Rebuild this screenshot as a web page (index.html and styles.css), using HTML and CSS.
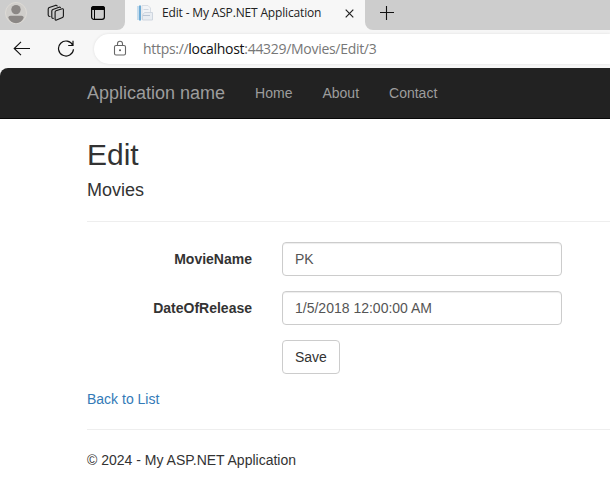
FILE: index.html
```html
<!DOCTYPE html>
<html lang="en">
<head>
<meta charset="utf-8">
<title>Edit - My ASP.NET Application</title>
<link rel="stylesheet" href="styles.css">
</head>
<body>
<div class="tabstrip">
  <div class="strip-left">
    <svg class="avatar" width="24" height="24" viewBox="0 0 24 24"><circle cx="12" cy="12" r="10.5" fill="#d0cecb" stroke="#dedbd6"/><circle cx="12" cy="8.6" r="4.7" fill="#8b8785"/><path d="M4.3 16.8Q4.3 14.8 6.5 14.8H17.5Q19.7 14.8 19.7 16.8Q17.5 22.2 12 22.2Q6.5 22.2 4.3 16.8Z" fill="#8b8785"/></svg>
    <svg class="workspaces" width="18" height="18" viewBox="0 0 18 18" fill="none" stroke="#151515" stroke-width="1.1" stroke-linejoin="round" stroke-linecap="round"><path d="M8.1 8.1Q8.1 7.1 9 6.8L15.2 4.8Q16.4 4.5 16.4 5.7V12Q16.4 13 15.5 13.4L9.5 16Q8.1 16.5 8.1 15.2Z"/><path d="M6.3 14.4Q4.8 14.5 4.8 13V7Q4.8 5.8 5.9 5.4L12 3.2Q13 2.9 13.4 3.6"/><path d="M3 12.5Q1.2 12.4 1.2 11V5.2Q1.2 4 2.3 3.6L8.3 1.4Q9.7 1 10.2 2"/></svg>
    <svg class="tabmenu" width="16" height="16" viewBox="0 0 16 16"><rect x="1.6" y="1.6" width="12.8" height="12.8" rx="2.4" fill="none" stroke="#050505" stroke-width="1.2"/><path d="M1 5V3.5Q1 1 3.5 1H12.5Q15 1 15 3.5V5Z" fill="#050505"/><path d="M4.5 5V14.5" stroke="#050505"/></svg>
  </div>
  <div class="tab">
    <svg class="favicon" width="18" height="18" viewBox="0 0 18 18"><path d="M1 2H3V16H1Z" fill="#c5dced"/><path d="M3 1.5H5V16.5H3Z" fill="#6dabd6"/><path d="M6 1.5H12L14.5 4V15.5H6Z" fill="#f2f4f7" stroke="#d9dee5"/><path d="M7.5 5.5H12.5" stroke="#d0d8e2"/><path d="M8.5 8.5H16.5V16H6.5V11Z" fill="#e9edf2" stroke="#cfd6df"/><path d="M7 11.5H14" stroke="#b9c5d4"/></svg>
    <span class="tab-title">Edit - My ASP.NET Application</span>
    <svg class="close" width="9" height="9" viewBox="0 0 9 9"><path d="M.7 .7L8.3 8.3M8.3 .7L.7 8.3" stroke="#222" stroke-width="1.2"/></svg>
  </div>
  <div class="strip-right">
    <svg width="14" height="14" viewBox="0 0 14 14"><path d="M6.5 0V14M0 6.5H14" stroke="#111" stroke-width="1.1"/></svg>
  </div>
</div>
<div class="toolbar">
  <svg class="back" width="18" height="16" viewBox="0 0 18 16" fill="none" stroke="#111" stroke-width="1.1"><path d="M17 7.5H1.3M8 .8L1.2 7.5L8 14.2"/></svg>
  <svg class="reload" width="18" height="18" viewBox="0 0 18 18" fill="none" stroke="#111" stroke-width="1.2"><path d="M15.8 5.3A7.5 7.5 0 1 0 16.5 9.2M16 .8V5.5H11.2"/></svg>
  <div class="address">
    <svg class="lock" width="14" height="17" viewBox="0 0 14 17"><rect x="1.5" y="5.5" width="11" height="9.5" rx="1.5" fill="none" stroke="#666" stroke-width="1.1"/><path d="M4.5 5.5V3.7A2.5 2.5 0 0 1 9.5 3.7V5.5" fill="none" stroke="#666" stroke-width="1.1"/><circle cx="7" cy="10.3" r="1" fill="#555"/></svg>
    <span class="url">https://<b>localhost</b>:44329/Movies/Edit/3</span>
  </div>
</div>
<div class="page">
  <nav class="navbar">
    <a class="brand">Application name</a>
    <a class="nav-link">Home</a>
    <a class="nav-link">About</a>
    <a class="nav-link">Contact</a>
  </nav>
  <main class="content">
    <h2>Edit</h2>
    <h4>Movies</h4>
    <hr>
    <form class="form">
      <label for="name">MovieName</label>
      <input id="name" type="text" value="PK">
      <label for="date">DateOfRelease</label>
      <input id="date" type="text" value="1/5/2018 12:00:00 AM">
      <button class="save" type="button">Save</button>
    </form>
    <a class="back-link">Back to List</a>
    <hr>
    <footer>© 2024 - My ASP.NET Application</footer>
  </main>
</div>
</body>
</html>
```
FILE: styles.css
```css
* { box-sizing: border-box; }
body {
  margin: 0;
  height: 490px;
  overflow: hidden;
  background: #f7f7f7;
  color: #333;
  font: 14px/20px "Liberation Sans", Arial, sans-serif;
}
svg { display: block; flex: none; }
.tabstrip { display: flex; height: 30px; background: #f7f7f7; }
.strip-left {
  display: flex;
  width: 125px;
  padding-left: 4px;
  background: #cdcdcd;
  border-bottom-right-radius: 8px;
}
.avatar { margin-top: 1px; }
.workspaces { margin: 4px 0 0 19px; }
.tabmenu { margin: 5px 0 0 25px; }
.tab { display: flex; width: 240px; padding-left: 11px; }
.favicon { margin-top: 4px; }
.tab-title {
  width: 160px;
  margin: 3px 0 0 8px;
  color: #222;
  font: 12px/20px "Open Sans", sans-serif;
  letter-spacing: -0.16px;
  white-space: nowrap;
}
.close { margin: 9px 0 0 23px; }
.strip-right {
  flex: 1;
  padding: 6px 0 0 15px;
  background: #cdcdcd;
  border-bottom-left-radius: 8px;
}
.toolbar { display: flex; height: 38px; padding-left: 13px; }
.back { margin-top: 11px; }
.reload { margin: 10px 0 0 26px; }
.address {
  display: flex;
  flex: 1;
  height: 30px;
  margin: 4px 0 0 19px;
  padding-left: 19px;
  background: #fff;
  border-radius: 15px 0 0 15px;
  box-shadow: 0 0 3px rgba(0, 0, 0, .1);
}
.lock { margin-top: 6px; }
.url {
  margin: 5px 0 0 16px;
  color: #777;
  font: 14px/20px "Open Sans", sans-serif;
  letter-spacing: -0.3px;
  white-space: nowrap;
}
.url b { color: #111; font-weight: 400; }
.page {
  height: 422px;
  background: #fff;
  border-top-left-radius: 8px;
  overflow: hidden;
}
.navbar {
  display: flex;
  height: 51px;
  padding: 15px 0 0 87px;
  background: #222;
  border-bottom: 1px solid #080808;
  color: #9d9d9d;
}
.brand { margin-right: 15px; font-size: 18px; }
.nav-link { padding: 0 15px; }
.content { padding: 19px 0 0 87px; }
h2, h4 { font-weight: 400; line-height: 1.1; }
h2 { margin: 0; font-size: 30px; }
h4 { margin: 10px 0 0; font-size: 18px; }
hr { height: 1px; margin: 20px 0; border: 0; background: #eee; }
h4 + hr { margin-top: 20.2px; }
.form {
  display: grid;
  grid-template-columns: 165px 280px;
  gap: 15px 30px;
  margin-bottom: 15px;
}
label { padding-top: 7px; font-weight: 700; text-align: right; }
input, .save {
  height: 34px;
  padding: 6px 12px;
  border: 1px solid #ccc;
  border-radius: 4px;
  background: #fff;
  font: inherit;
}
input {
  width: 280px;
  color: #555;
  box-shadow: inset 0 1px 1px rgba(0, 0, 0, .075);
}
.save { grid-column: 2; justify-self: start; color: #333; }
.back-link { display: block; color: #337ab7; }
```
